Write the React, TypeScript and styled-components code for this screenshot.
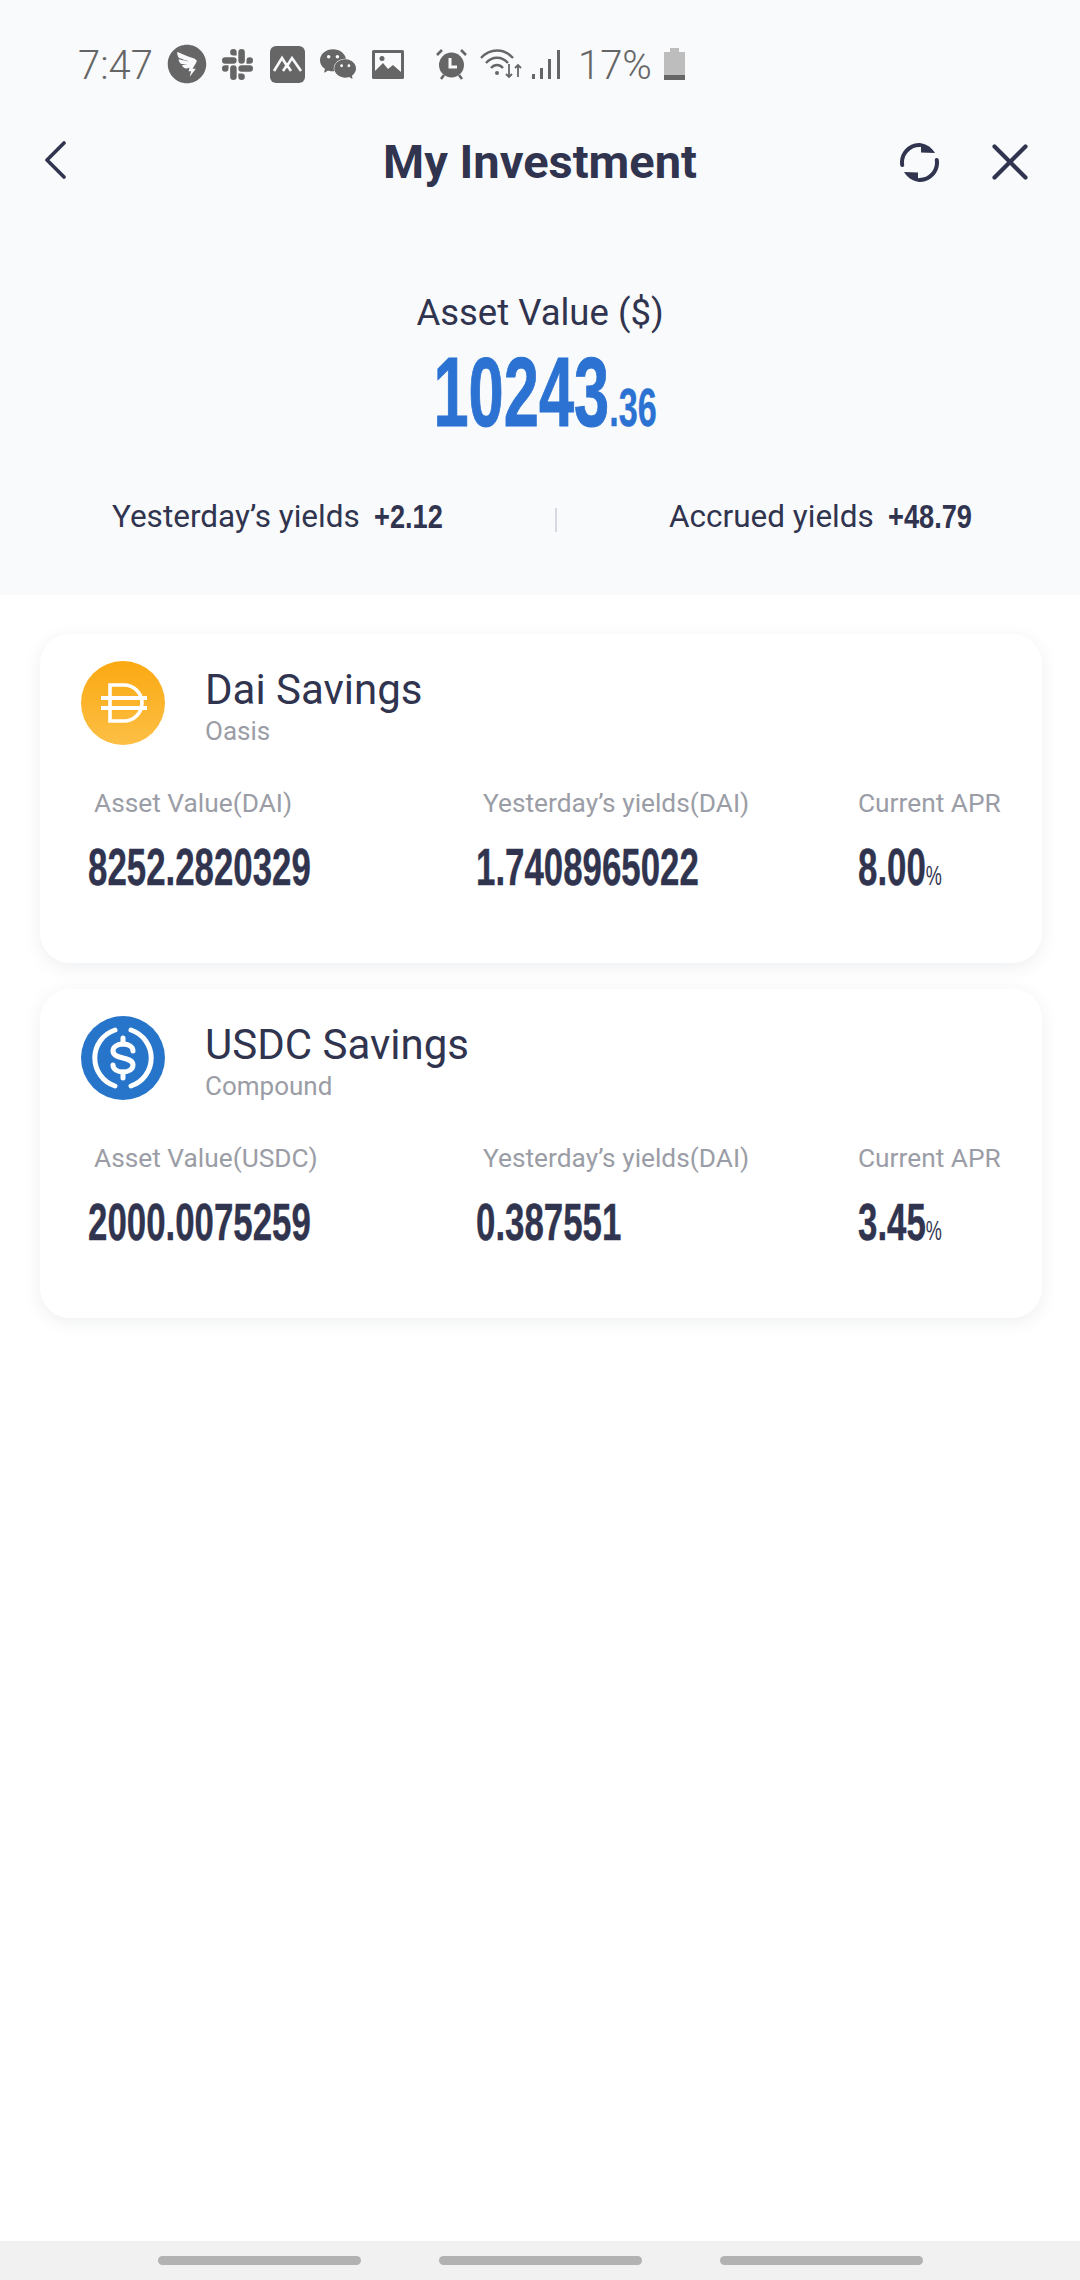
import styled, { createGlobalStyle } from "styled-components";
import { AiFillDingtalkCircle } from "react-icons/ai";
import { SiSlack, SiWechat } from "react-icons/si";

const INK = "#30344f";
const MUTED = "#9b9da6";
const STATUS = "#666666";

const assets = [
  {
    id: "dai",
    name: "Dai Savings",
    platform: "Oasis",
    unit: "DAI",
    value: "8252.2820329",
    yields: "1.7408965022",
    apr: "8.00",
  },
  {
    id: "usdc",
    name: "USDC Savings",
    platform: "Compound",
    unit: "USDC",
    value: "2000.0075259",
    yields: "0.387551",
    apr: "3.45",
  },
];

const MountainIcon = () => (
  <svg width="35" height="37" viewBox="0 0 35 37">
    <rect width="35" height="37" rx="6" fill={STATUS} />
    <path d="M4 25L12 12l5 8 5-8 9 13M13 25l4-6 4 6" fill="none" stroke="#f9fafc" strokeWidth="2.6" />
  </svg>
);

const PictureIcon = () => (
  <svg width="32" height="29" viewBox="0 0 32 29">
    <rect width="32" height="29" rx="1.500" fill={STATUS} />
    <rect x="3" y="3" width="26" height="23" fill="#f9fafc" />
    <path d="M3 26v-5l8-8 5 6 5-4 8 7v4z" fill={STATUS} />
    <circle cx="10" cy="8.500" r="2.500" fill={STATUS} />
  </svg>
);

const AlarmIcon = () => (
  <svg width="33" height="31" viewBox="0 0 33 31">
    <circle cx="16.500" cy="16" r="12.500" fill={STATUS} />
    <path d="M15 9v9h7" fill="none" stroke="#f9fafc" strokeWidth="3" />
    <path d="M2 6l5-5M31 6l-5-5M6 30l3-4M27 30l-3-4" stroke={STATUS} strokeWidth="2.600" />
  </svg>
);

const WifiIcon = () => (
  <svg width="42" height="30" viewBox="0 0 42 30" fill="none" stroke={STATUS}>
    <path d="M1 9C10-1 24-1 33 9" strokeWidth="2.400" />
    <path d="M6 14C12 7 22 7 28 14" strokeWidth="2.400" />
    <path d="M11 19C14.500 15 19.500 15 23 19" strokeWidth="2.400" />
    <circle cx="17" cy="24" r="2" fill={STATUS} stroke="none" />
    <path d="M29 15v13m-3-3l3 3 3-3M38 28V16m-3 3l3-3 3 3" strokeWidth="1.800" />
  </svg>
);

const SignalIcon = () => (
  <svg width="28" height="29" viewBox="0 0 28 29" fill={STATUS}>
    <rect x="0" y="24" width="3" height="5" />
    <rect x="8" y="18" width="3" height="11" />
    <rect x="16" y="9" width="3" height="20" />
    <rect x="25" y="0" width="3" height="29" />
  </svg>
);

const BatteryIcon = () => (
  <svg width="21" height="32" viewBox="0 0 21 32">
    <path d="M6 0h9v4h6v28H0V4h6z" fill="#bdbdbd" />
    <path d="M0 27h21v5H0z" fill={STATUS} />
  </svg>
);

const ChevronIcon = () => (
  <svg width="22" height="38" viewBox="0 0 22 38" fill="none">
    <path d="M20 2L3 19l17 17" stroke={INK} strokeWidth="3.600" strokeLinecap="round" strokeLinejoin="round" />
  </svg>
);

const RefreshIcon = () => (
  <svg width="39" height="39" viewBox="0 0 39 39" fill="none">
    <path d="M2.200 22A17.500 17.500 0 0 1 20 2" stroke={INK} strokeWidth="4" strokeLinecap="round" />
    <path d="M36.800 17A17.500 17.500 0 0 1 19 37" stroke={INK} strokeWidth="4" strokeLinecap="round" />
    <path d="M21 .500L21 9.500 35 10C32 5 27 1 21 .500z" fill={INK} />
    <path d="M18 38.500L18 29.500 4 29C7 34 12 38 18 38.500z" fill={INK} />
  </svg>
);

const CloseIcon = () => (
  <svg width="36" height="36" viewBox="0 0 36 36" fill="none">
    <path d="M2.500 2.500l31 31M33.500 2.500l-31 31" stroke={INK} strokeWidth="4.200" strokeLinecap="round" />
  </svg>
);

const DaiLogo = () => (
  <svg width="84" height="84" viewBox="0 0 84 84">
    <defs>
      <linearGradient id="daiFill" x1="0" y1="0" x2="0" y2="1">
        <stop offset="0" stopColor="#fba912" />
        <stop offset="1" stopColor="#fcbf45" />
      </linearGradient>
    </defs>
    <circle cx="42" cy="42" r="42" fill="url(#daiFill)" />
    <path d="M29 24h14a18 18 0 0 1 0 36H29z" fill="none" stroke="#fff" strokeWidth="3.600" />
    <path d="M20 37h46M20 47h46" stroke="#fff" strokeWidth="4" />
  </svg>
);

const UsdcLogo = () => (
  <svg width="84" height="84" viewBox="0 0 84 84" fill="none">
    <circle cx="42" cy="42" r="42" fill="#2775ca" />
    <path d="M34 14A29.500 29.500 0 0 0 34 70M50 14A29.500 29.500 0 0 1 50 70" stroke="#fff" strokeWidth="5" strokeLinecap="round" />
    <path d="M52 35c0-4-4-7-10-7s-10 3-10 7c0 9 20 5 20 14 0 4-4 7-10 7s-10-3-10-7" stroke="#fff" strokeWidth="5" strokeLinecap="round" />
    <path d="M42 22v40" stroke="#fff" strokeWidth="5" strokeLinecap="round" strokeDasharray="6 28" />
  </svg>
);

const GlobalStyle = createGlobalStyle`
  html, body {
    margin: 0;
    background: #fff;
  }
  * {
    box-sizing: border-box;
  }
`;

const Page = styled.div`
  width: 1080px;
  height: 2280px;
  display: flex;
  flex-direction: column;
  overflow: hidden;
  background: #fff;
  color: ${INK};
  font-family: Roboto, "Liberation Sans", sans-serif;
`;

const Header = styled.header`
  height: 595px;
  flex: none;
  background: #f9fafc;
`;

const StatusBar = styled.div`
  height: 84px;
  padding: 44px 0 0 78px;
  display: flex;
  align-items: center;
  color: ${STATUS};
  font-size: 40px;
  font-weight: 300;
  line-height: 40px;
`;

const StatusText = styled.span<{ $left?: number }>`
  margin: 3px 0 0 ${(p) => p.$left ?? 0}px;
`;

const StatusItem = styled.span<{ $left: number }>`
  display: flex;
  align-items: center;
  margin-left: ${(p) => p.$left}px;
`;

const TopBar = styled.div`
  height: 156px;
  padding: 0 44px;
  display: grid;
  grid-template-columns: 1fr auto 1fr;
  align-items: center;
`;

const Title = styled.h1`
  margin: 0;
  font-size: 47px;
  font-weight: 700;
  line-height: 56px;
`;

const Actions = styled.div`
  padding-right: 8px;
  display: flex;
  justify-content: flex-end;
  align-items: center;
  gap: 53px;
`;

const Summary = styled.section`
  padding-top: 52px;
  text-align: center;
`;

const SummaryLabel = styled.div`
  font-size: 36.5px;
  line-height: 42px;
`;

const Condensed = styled.span`
  display: inline-block;
  font-family: "Liberation Sans", sans-serif;
  font-weight: 700;
  transform: scaleX(0.67);
  transform-origin: left center;
  white-space: nowrap;
`;

const Total = styled(Condensed)`
  margin-top: 8px;
  margin-left: 10px;
  color: #2b72d2;
  font-size: 98px;
  line-height: 100px;
  transform: scaleX(0.645);
  transform-origin: center;
  -webkit-text-stroke: 1px #2b72d2;
`;

const TotalCents = styled.span`
  font-size: 53px;
  -webkit-text-stroke: 0.4px #2b72d2;
`;

const StatsRow = styled.div`
  margin-top: 39px;
  padding-left: 112px;
  display: grid;
  grid-template-columns: 443px 114px 1fr;
  align-items: center;
  text-align: left;
  font-size: 31.5px;
  line-height: 40px;
`;

const Stat = styled.div`
  display: flex;
  align-items: center;
  gap: 14px;
  white-space: nowrap;
`;

const StatValue = styled(Condensed)`
  margin-top: -3px;
  font-size: 34px;
  transform: scaleX(0.8);
`;

const Divider = styled.i`
  display: block;
  width: 2px;
  height: 24px;
  margin-top: 6px;
  background: #d6d9e2;
`;

const CardList = styled.main`
  padding: 39px 38px 0 40px;
  display: flex;
  flex-direction: column;
  gap: 26px;
`;

const Card = styled.article`
  height: 329px;
  padding: 27px 0 0 41px;
  border-radius: 30px;
  background: #fff;
  box-shadow: 0 4px 18px rgba(40, 50, 80, 0.08);
`;

const CardHead = styled.div`
  display: flex;
  gap: 40px;
`;

const CardName = styled.h2`
  margin: 5px 0 0;
  font-size: 42px;
  font-weight: 400;
  line-height: 48px;
`;

const CardPlatform = styled.div`
  margin-top: 1px;
  color: ${MUTED};
  font-size: 26px;
  line-height: 32px;
`;

const CardStats = styled.div`
  margin: 39px 0 0 7px;
  display: grid;
  grid-template-columns: 388px 382px 1fr;
`;

const CardLabel = styled.div<{ $indent?: number }>`
  padding-left: ${(p) => p.$indent ?? 0}px;
  color: ${MUTED};
  font-size: 26.3px;
  line-height: 34px;
  white-space: nowrap;
`;

const CardValue = styled(Condensed)`
  display: block;
  margin-top: 19px;
  font-size: 52px;
  line-height: 56px;
  -webkit-text-stroke: 0.4px ${INK};
`;

const Percent = styled.span`
  font-size: 27px;
  font-weight: 400;
  -webkit-text-stroke: 0;
`;

const NavBar = styled.footer`
  margin-top: auto;
  height: 39px;
  padding-top: 15px;
  display: flex;
  justify-content: center;
  gap: 78px;
  background: #f1f1f1;
`;

const NavPill = styled.span`
  width: 203px;
  height: 9px;
  border-radius: 5px;
  background: #b2b2b2;
`;

export default function App() {
  return (
    <Page>
      <GlobalStyle />
      <Header>
        <StatusBar>
          <StatusText>7:47</StatusText>
          <StatusItem $left={12}><AiFillDingtalkCircle size={44} color={STATUS} /></StatusItem>
          <StatusItem $left={13}><SiSlack size={31} color={STATUS} /></StatusItem>
          <StatusItem $left={17}><MountainIcon /></StatusItem>
          <StatusItem $left={15}><SiWechat size={36} color={STATUS} /></StatusItem>
          <StatusItem $left={16}><PictureIcon /></StatusItem>
          <StatusItem $left={31}><AlarmIcon /></StatusItem>
          <StatusItem $left={12}><WifiIcon /></StatusItem>
          <StatusItem $left={10}><SignalIcon /></StatusItem>
          <StatusText $left={18}>17%</StatusText>
          <StatusItem $left={12}><BatteryIcon /></StatusItem>
        </StatusBar>
        <TopBar>
          <div><ChevronIcon /></div>
          <Title>My Investment</Title>
          <Actions>
            <RefreshIcon />
            <CloseIcon />
          </Actions>
        </TopBar>
        <Summary>
          <SummaryLabel>Asset Value ($)</SummaryLabel>
          <Total>
            10243<TotalCents>.36</TotalCents>
          </Total>
          <StatsRow>
            <Stat>
              Yesterday’s yields <StatValue>+2.12</StatValue>
            </Stat>
            <Divider />
            <Stat>
              Accrued yields <StatValue>+48.79</StatValue>
            </Stat>
          </StatsRow>
        </Summary>
      </Header>
      <CardList>
        {assets.map((asset) => (
          <Card key={asset.id}>
            <CardHead>
              {asset.id === "dai" ? <DaiLogo /> : <UsdcLogo />}
              <div>
                <CardName>{asset.name}</CardName>
                <CardPlatform>{asset.platform}</CardPlatform>
              </div>
            </CardHead>
            <CardStats>
              <div>
                <CardLabel $indent={6}>Asset Value({asset.unit})</CardLabel>
                <CardValue>{asset.value}</CardValue>
              </div>
              <div>
                <CardLabel $indent={7}>Yesterday’s yields(DAI)</CardLabel>
                <CardValue>{asset.yields}</CardValue>
              </div>
              <div>
                <CardLabel>Current APR</CardLabel>
                <CardValue>
                  {asset.apr}
                  <Percent>%</Percent>
                </CardValue>
              </div>
            </CardStats>
          </Card>
        ))}
      </CardList>
      <NavBar>
        <NavPill />
        <NavPill />
        <NavPill />
      </NavBar>
    </Page>
  );
}
